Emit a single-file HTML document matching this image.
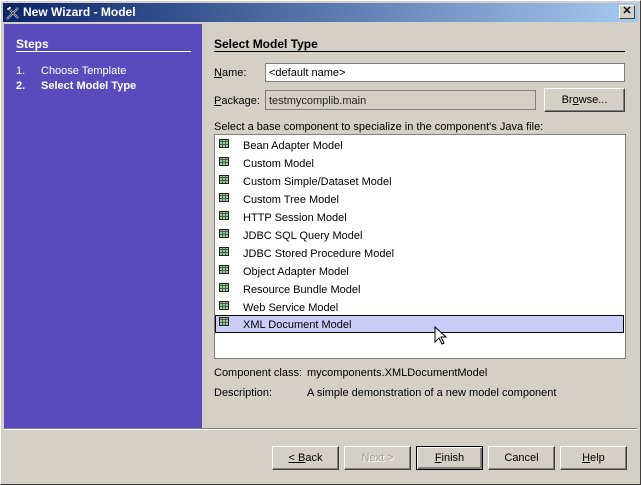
<!DOCTYPE html>
<html><head><style>
*{margin:0;padding:0;box-sizing:border-box}
body{width:641px;height:485px;background:#d4d0c8;font-family:"Liberation Sans",sans-serif;font-size:11px;color:#000;position:relative;overflow:hidden}
.abs{position:absolute}
.win{left:0;top:0;width:641px;height:485px;border:1px solid #fff;border-right-color:#404040;border-bottom-color:#404040}
.title{left:3px;top:3px;width:635px;height:19px;background:linear-gradient(90deg,#0a246a,#a6caf0);color:#fff;font-weight:bold;font-size:12px;line-height:19px;padding-left:20px}
.close{left:619px;top:5px;width:16px;height:14px;background:#d4d0c8;border:1px solid #fff;border-right-color:#404040;border-bottom-color:#404040;font-size:11px;line-height:11px;text-align:center;font-weight:bold;color:#000}
.left{left:4px;top:24px;width:198px;height:404px;background:#5a4bbd;color:#fff}
.btn{height:24px;background:#d4d0c8;border:1px solid #fff;border-right-color:#404040;border-bottom-color:#404040;box-shadow:inset -1px -1px #808080;text-align:center;line-height:22px;font-size:11px}
.row{left:216px;width:406px;height:18px;line-height:18px;padding-left:27px}
.ic{position:absolute;left:3px;top:2px;width:10px;height:9px;border:1px solid #222;background:repeating-linear-gradient(90deg,#8ee08e 0 2px,#555 2px 3px),#8ee08e}
.ic:after{content:"";position:absolute;inset:0;background:repeating-linear-gradient(0deg,transparent 0 2px,#555 2px 3px)}
u{text-decoration:underline}
</style></head><body>
<div class="abs win"></div>
<div class="abs title">New Wizard - Model</div>
<svg class="abs" style="left:5px;top:5px" width="16" height="16" viewBox="0 0 16 16"><path d="M2 14L13 3M3 3l10 10" stroke="#fff" stroke-width="2"/><path d="M2 14L13 3M3 3l10 10" stroke="#333" stroke-width="1"/><path d="M1 4l4-3 2 2-4 3z" fill="#ddd" stroke="#000" stroke-width=".6"/></svg>
<div class="abs close">✕</div>
<div class="abs left">
 <div class="abs" style="left:12px;top:13px;font-weight:bold;font-size:12px">Steps</div>
 <div class="abs" style="left:12px;top:27px;width:175px;height:1px;background:#fff"></div>
 <div class="abs" style="left:12px;top:41px">1.</div>
 <div class="abs" style="left:37px;top:41px">Choose Template</div>
 <div class="abs" style="left:12px;top:56px;font-weight:bold">2.</div>
 <div class="abs" style="left:37px;top:56px;font-weight:bold">Select Model Type</div>
</div>
<div class="abs" style="left:214px;top:37px;font-weight:bold;font-size:12px">Select Model Type</div>
<div class="abs" style="left:214px;top:51px;width:411px;height:1px;background:#000"></div>
<div class="abs" style="left:214px;top:67px"><u>N</u>ame:</div>
<div class="abs" style="left:265px;top:63px;width:360px;height:19px;background:#fff;border:1px solid #808080;padding:3px 3px">&lt;default name&gt;</div>
<div class="abs" style="left:214px;top:95px"><u>P</u>ackage:</div>
<div class="abs" style="left:265px;top:90px;width:271px;height:20px;border:1px solid #808080;padding:4px 3px;color:#222">testmycomplib.main</div>
<div class="abs btn" style="left:544px;top:88px;width:81px">Br<u>o</u>wse...</div>
<div class="abs" style="left:214px;top:121px">Select a base component to specialize in the component's Java file:</div>
<div class="abs" style="left:214px;top:134px;width:412px;height:225px;background:#fff;border:1px solid #808080"></div>
<div class="abs row" style="top:137px"><span class="ic"></span>Bean Adapter Model</div>
<div class="abs row" style="top:155px"><span class="ic"></span>Custom Model</div>
<div class="abs row" style="top:173px"><span class="ic"></span>Custom Simple/Dataset Model</div>
<div class="abs row" style="top:191px"><span class="ic"></span>Custom Tree Model</div>
<div class="abs row" style="top:209px"><span class="ic"></span>HTTP Session Model</div>
<div class="abs row" style="top:227px"><span class="ic"></span>JDBC SQL Query Model</div>
<div class="abs row" style="top:245px"><span class="ic"></span>JDBC Stored Procedure Model</div>
<div class="abs row" style="top:263px"><span class="ic"></span>Object Adapter Model</div>
<div class="abs row" style="top:281px"><span class="ic"></span>Resource Bundle Model</div>
<div class="abs row" style="top:299px"><span class="ic"></span>Web Service Model</div>
<div class="abs row" style="top:315px;left:215px;width:409px;height:18px;background:#ccccf8;border:1px solid #000;line-height:18px;padding-left:27px"><span class="ic" style="left:3px;top:1px"></span>XML Document Model</div>
<svg class="abs" style="left:434px;top:326px" width="14" height="20" viewBox="0 0 14 20"><path d="M1 1v15l4-4 3 6 2-1-3-6h5z" fill="#fff" stroke="#000" stroke-width="1"/></svg>
<div class="abs" style="left:214px;top:367px">Component class:</div>
<div class="abs" style="left:307px;top:367px">mycomponents.XMLDocumentModel</div>
<div class="abs" style="left:214px;top:387px">Description:</div>
<div class="abs" style="left:307px;top:387px">A simple demonstration of a new model component</div>
<div class="abs" style="left:4px;top:428px;width:633px;height:1px;background:#808080"></div>
<div class="abs" style="left:4px;top:429px;width:633px;height:1px;background:#fff"></div>
<div class="abs btn" style="left:272px;top:446px;width:67px"><u>&lt; B</u>ack</div>
<div class="abs btn" style="left:344px;top:446px;width:67px;color:#a0a0a0;text-shadow:1px 1px #fff">Next &gt;</div>
<div class="abs btn" style="left:416px;top:446px;width:67px;border:1px solid #000;box-shadow:inset 1px 1px #fff,inset -2px -2px #808080"><u>F</u>inish</div>
<div class="abs btn" style="left:488px;top:446px;width:67px">Cancel</div>
<div class="abs btn" style="left:560px;top:446px;width:67px"><u>H</u>elp</div>
</body></html>
